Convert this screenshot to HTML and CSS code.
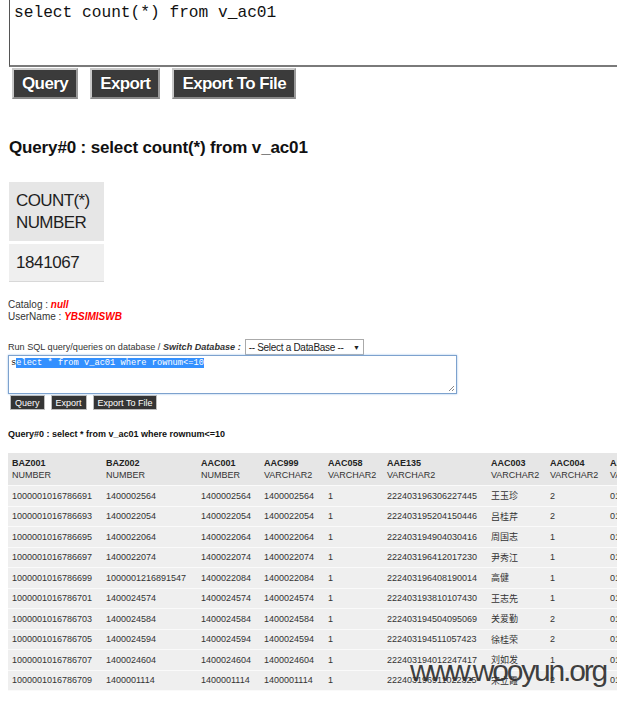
FILE: index.html
```html
<!DOCTYPE html>
<html>
<head>
<meta charset="utf-8">
<link rel="stylesheet" href="styles.css">
</head>
<body>
<div class="page">
  <div class="big-editor">select count(*) from v_ac01</div>
  <div class="big-buttons">
    <button class="big-btn">Query</button>
    <button class="big-btn">Export</button>
    <button class="big-btn">Export To File</button>
  </div>
  <h2 class="big-title">Query#0 : select count(*) from v_ac01</h2>
  <table class="count-table">
    <tr><td class="count-head">COUNT(*)<br>NUMBER</td></tr>
    <tr><td class="count-cell">1841067</td></tr>
  </table>

  <div class="info">
    <div>Catalog : <span class="red">null</span></div>
    <div>UserName : <span class="red">YBSIMISWB</span></div>
  </div>

  <div class="run-line">
    <span>Run SQL query/queries on database / <b><i>Switch Database :</i></b></span>
    <span class="select">-- Select a DataBase -- <span class="arrow">&#9660;</span></span>
  </div>
  <div class="small-editor"><span class="first">s</span><span class="sel">elect * from v_ac01 where rownum&lt;=10</span>
    <svg class="grip" width="8" height="8" viewBox="0 0 8 8"><path d="M7 2 L2 7 M7 5 L5 7" stroke="#888" stroke-width="1"/></svg>
  </div>
  <div class="small-buttons">
    <button class="small-btn">Query</button>
    <button class="small-btn">Export</button>
    <button class="small-btn">Export To File</button>
  </div>

  <div class="small-title">Query#0 : select * from v_ac01 where rownum&lt;=10</div>

  <div class="table-wrap">
    <table class="data">
      <colgroup>
        <col style="width:94px"><col style="width:95px"><col style="width:63px"><col style="width:64px"><col style="width:59px"><col style="width:104px"><col style="width:59px"><col style="width:60px"><col style="width:60px">
      </colgroup>
      <thead>
        <tr>
          <th><b>BAZ001</b><br>NUMBER</th>
          <th><b>BAZ002</b><br>NUMBER</th>
          <th><b>AAC001</b><br>NUMBER</th>
          <th><b>AAC999</b><br>VARCHAR2</th>
          <th><b>AAC058</b><br>VARCHAR2</th>
          <th><b>AAE135</b><br>VARCHAR2</th>
          <th><b>AAC003</b><br>VARCHAR2</th>
          <th><b>AAC004</b><br>VARCHAR2</th>
          <th><b>AAC005</b><br>VARCHAR2</th>
        </tr>
      </thead>
      <tbody>
        <tr><td>1000001016786691</td><td>1400002564</td><td>1400002564</td><td>1400002564</td><td>1</td><td>222403196306227445</td><td>王玉珍</td><td>2</td><td>01</td></tr>
        <tr><td>1000001016786693</td><td>1400022054</td><td>1400022054</td><td>1400022054</td><td>1</td><td>222403195204150446</td><td>吕桂芹</td><td>2</td><td>01</td></tr>
        <tr><td>1000001016786695</td><td>1400022064</td><td>1400022064</td><td>1400022064</td><td>1</td><td>222403194904030416</td><td>周国志</td><td>1</td><td>01</td></tr>
        <tr><td>1000001016786697</td><td>1400022074</td><td>1400022074</td><td>1400022074</td><td>1</td><td>222403196412017230</td><td>尹秀江</td><td>1</td><td>01</td></tr>
        <tr><td>1000001016786699</td><td>1000001216891547</td><td>1400022084</td><td>1400022084</td><td>1</td><td>222403196408190014</td><td>高健</td><td>1</td><td>01</td></tr>
        <tr><td>1000001016786701</td><td>1400024574</td><td>1400024574</td><td>1400024574</td><td>1</td><td>222403193810107430</td><td>王志先</td><td>1</td><td>01</td></tr>
        <tr><td>1000001016786703</td><td>1400024584</td><td>1400024584</td><td>1400024584</td><td>1</td><td>222403194504095069</td><td>关爱勤</td><td>2</td><td>01</td></tr>
        <tr><td>1000001016786705</td><td>1400024594</td><td>1400024594</td><td>1400024594</td><td>1</td><td>222403194511057423</td><td>徐桂荣</td><td>2</td><td>01</td></tr>
        <tr><td>1000001016786707</td><td>1400024604</td><td>1400024604</td><td>1400024604</td><td>1</td><td>222403194012247417</td><td>刘如发</td><td>1</td><td>01</td></tr>
        <tr><td>1000001016786709</td><td>1400001114</td><td>1400001114</td><td>1400001114</td><td>1</td><td>222403196911022325</td><td>宋立霞</td><td>2</td><td>01</td></tr>
      </tbody>
    </table>
    <div class="watermark">www.wooyun.org</div>
  </div>
</div>
</body>
</html>
```

FILE: styles.css
```css
html, body {
  margin: 0;
  padding: 0;
  overflow: hidden;
  background: #fff;
}
body {
  font-family: "Liberation Sans", Arial, "Noto Sans CJK SC", sans-serif;
  color: #222;
}
.page {
  padding-left: 8px;
  width: 700px;
}
.big-editor {
  margin-left: 1px;
  height: 62px;
  border: 1px solid #bbb;
  border-left: 1px solid #555;
  border-top-color: #eee;
  border-bottom: 2px solid #7a7a7a;
  border-right: none;
  font-family: "Liberation Mono", "Courier New", monospace;
  font-size: 16.2px;
  line-height: 20px;
  padding: 3px 0 0 4px;
  color: #111;
  margin-top: -1px;
}
.big-buttons {
  display: flex;
  gap: 12px;
  margin-top: 1px;
  padding-left: 4px;
}
.big-btn {
  background: #3b3b3b;
  color: #fff;
  border: 2px solid #c8c8c8;
  border-right-color: #9a9a9a;
  border-bottom-color: #8a8a8a;
  font-family: "Liberation Sans", Arial, sans-serif;
  font-weight: bold;
  font-size: 17px;
  letter-spacing: -0.6px;
  height: 31px;
  padding: 0 8px;
  text-shadow: 0 0 1px #000;
}
.big-title {
  font-size: 17px;
  letter-spacing: -0.15px;
  font-weight: bold;
  margin: 38px 0 0 1px;
  line-height: 22px;
  color: #111;
}
.count-table {
  border-collapse: separate;
  border-spacing: 0;
  margin: 23px 0 0 1px;
}
.count-head {
  background: #e6e6e6;
  width: 81px;
  height: 59px;
  padding: 0 7px;
  font-size: 17px;
  letter-spacing: -0.6px;
  line-height: 22px;
  color: #1e1e1e;
  border-bottom: 3px solid #fff;
}
.count-cell {
  background: #efefef;
  height: 37px;
  padding: 0 7px;
  font-size: 17px;
  letter-spacing: -0.4px;
  color: #1e1e1e;
  border-bottom: 1px solid #d8d8d8;
}
.info {
  margin-top: 17px;
  font-size: 10px;
  line-height: 12px;
  color: #333;
}
.red {
  color: #f00;
  font-weight: bold;
  font-style: italic;
  font-size: 10px;
}
.run-line {
  margin-top: 16px;
  display: flex;
  align-items: center;
  gap: 4px;
  font-size: 9.1px;
  color: #333;
  height: 16px;
}
.select {
  display: inline-flex;
  align-items: center;
  justify-content: space-between;
  width: 111px;
  height: 14px;
  border: 1px solid #aaa;
  padding: 0 3px;
  font-size: 10px;
  letter-spacing: -0.3px;
  color: #222;
  background: #fff;
}
.arrow {
  font-size: 7px;
}
.small-editor {
  position: relative;
  width: 445px;
  height: 36px;
  border: 1px solid #7da2ce;
  box-shadow: 0 0 2px #9cc0ea;
  margin-top: 0;
  font-family: "Liberation Mono", "Courier New", monospace;
  font-size: 8.7px;
  line-height: 13px;
  padding: 1px 0 0 2px;
  color: #111;
}
.sel {
  background: #3390ff;
  color: #fff;
}
.grip {
  position: absolute;
  right: 1px;
  bottom: 1px;
}
.small-buttons {
  display: flex;
  gap: 6px;
  margin-top: 1px;
  padding-left: 2px;
}
.small-btn {
  background: #353535;
  color: #fff;
  border: 1px solid #bdbdbd;
  font-family: "Liberation Sans", Arial, sans-serif;
  font-size: 9px;
  height: 15px;
  padding: 0 4px;
  line-height: 12px;
}
.small-title {
  margin-top: 18px;
  font-size: 9px;
  font-weight: bold;
  color: #111;
  line-height: 12px;
}
.table-wrap {
  position: relative;
  margin-top: 13px;
}
.data {
  border-collapse: collapse;
  table-layout: fixed;
  width: 658px;
  font-size: 9px;
  color: #333;
}
.data th {
  background: #e6e6e6;
  text-align: left;
  font-weight: normal;
  padding: 0 4px;
  height: 32px;
  line-height: 12px;
  vertical-align: middle;
  border-bottom: 1px solid #fafafa;
  white-space: nowrap;
  overflow: hidden;
}
.data th b {
  font-weight: bold;
  color: #222;
}
.data td {
  background: #efefef;
  padding: 0 4px;
  height: 19.5px;
  border-bottom: 1px solid #fafafa;
  white-space: nowrap;
  overflow: hidden;
}
.watermark {
  position: absolute;
  left: 402px;
  top: 198px;
  font-family: "Liberation Sans", Arial, sans-serif;
  font-size: 30px;
  letter-spacing: -2.2px;
  color: rgba(45, 45, 45, 0.92);
  line-height: 40px;
}
```
